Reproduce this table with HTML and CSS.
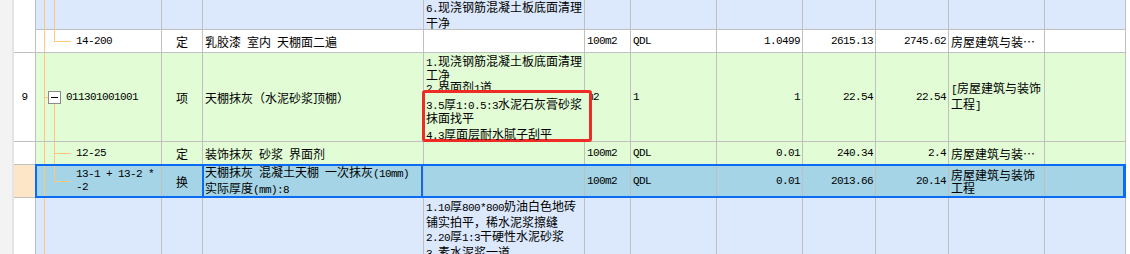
FILE: index.html
```html
<!DOCTYPE html>
<html lang="zh-CN">
<head>
<meta charset="utf-8">
<title>清单</title>
<link rel="stylesheet" href="styles.css">
</head>
<body>
<div class="strip"></div>
<div class="sheet">
  <div class="row blue h30">
    <div class="no"></div>
    <div class="code tr-mid"></div>
    <div></div>
    <div></div>
    <div class="desc bottom"><span><span class="a">6.</span>现浇钢筋混凝土板底面清理<br>干净</span></div>
    <div></div><div></div><div></div><div></div><div></div><div></div><div></div>
  </div>

  <div class="row white h23">
    <div class="no"></div>
    <div class="code tr-end"><span class="a">14-200</span></div>
    <div class="c">定</div>
    <div class="nm">乳胶漆 室内 天棚面二遍</div>
    <div></div>
    <div class="a">100m2</div>
    <div class="a">QDL</div>
    <div class="a r">1.0499</div>
    <div class="a r">2615.13</div>
    <div class="a r">2745.62</div>
    <div><span class="ell">房屋建筑与装饰工程</span></div>
    <div></div>
  </div>

  <div class="row green h89">
    <div class="no c a">9</div>
    <div class="code par tr-par"><span class="box"></span><span class="a">011301001001</span></div>
    <div class="c">项</div>
    <div class="nm">天棚抹灰（水泥砂浆顶棚）</div>
    <div class="desc top rel">
      <span class="lines12"><span class="a">1.</span>现浇钢筋混凝土板底面清理<br>工净<br><span class="a">2.</span>界面剂<span class="a">1</span>道</span>
      <div class="mark">
        <div class="l1"><span class="a">3.5</span>厚<span class="a">1:0.5:3</span>水泥石灰膏砂浆</div>
        <div class="l1">抹面找平</div>
        <div class="l3"><span class="a">4.3</span>厚面层耐水腻子刮平</div>
      </div>
    </div>
    <div class="a">m2</div>
    <div class="a">1</div>
    <div class="a r">1</div>
    <div class="a r">22.54</div>
    <div class="a r">22.54</div>
    <div><span><span class="a">[</span>房屋建筑与装饰<br>工程<span class="a">]</span></span></div>
    <div></div>
  </div>

  <div class="row green h23">
    <div class="no"></div>
    <div class="code tr-tee"><span class="a">12-25</span></div>
    <div class="c">定</div>
    <div class="nm">装饰抹灰 砂浆 界面剂</div>
    <div></div>
    <div class="a">100m2</div>
    <div class="a">QDL</div>
    <div class="a r">0.01</div>
    <div class="a r">240.34</div>
    <div class="a r">2.4</div>
    <div><span class="ell">房屋建筑与装饰工程</span></div>
    <div></div>
  </div>

  <div class="row sel h33">
    <div class="no cur"></div>
    <div class="code tr-end"><span class="a">13-1 + 13-2 *<br>-2</span></div>
    <div class="c">换</div>
    <div class="nm focus"><span>天棚抹灰 混凝土天棚 一次抹灰<span class="a">(10mm)</span><br>实际厚度<span class="a">(mm):8</span></span></div>
    <div></div>
    <div class="a">100m2</div>
    <div class="a">QDL</div>
    <div class="a r">0.01</div>
    <div class="a r">2013.66</div>
    <div class="a r">20.14</div>
    <div><span>房屋建筑与装饰<br>工程</span></div>
    <div></div>
  </div>

  <div class="row blue h70">
    <div class="no"></div>
    <div class="code tr"></div>
    <div></div>
    <div></div>
    <div class="desc top"><span class="lines14"><span class="a">1.10</span>厚<span class="a">800*800</span>奶油白色地砖<br>铺实拍平，稀水泥浆擦缝<br><span class="a">2.20</span>厚<span class="a">1:3</span>干硬性水泥砂浆<br><span class="a">3.</span>素水泥浆一道</span></div>
    <div></div><div></div><div></div><div></div><div></div><div></div><div></div>
  </div>
</div>
</body>
</html>
```

FILE: styles.css
```css
* { box-sizing: border-box; margin: 0; padding: 0; }

html, body {
  width: 1130px;
  height: 254px;
  overflow: hidden;
  background: #ffffff;
}

body {
  display: flex;
  align-items: flex-start;
  font-family: "Noto Sans CJK SC", "Noto Sans", sans-serif;
  font-size: 12px;
  line-height: 13px;
  color: #000;
}

.strip {
  flex: none;
  width: 14px;
  height: 254px;
  background: #f3f3f3;
  border-right: 2px solid #e4e4e4;
}

.sheet {
  flex: none;
  width: 1112px;
  display: flex;
  flex-direction: column;
}

.row {
  display: grid;
  grid-template-columns: 22px 126px 41px 221px 161px 46px 86px 86px 73px 73px 96px 81px;
  border-bottom: 1px solid #c0c0c0;
}

.row > div {
  display: flex;
  align-items: center;
  min-width: 0;
  padding: 0 2px;
  white-space: nowrap;
  border-right: 1px solid #c0c0c0;
}

.h30 { height: 30px; }
.h23 { height: 23px; }
.h89 { height: 89px; }
.h33 { height: 33px; }
.h70 { height: 70px; }

.blue { background: #dce9fc; }
.green { background: #e2fcd6; }
.white { background: #ffffff; }
.sel { background: #a5d4e6; position: relative; }

.sel::after {
  content: "";
  position: absolute;
  left: 21px;
  top: -1px;
  right: 0;
  bottom: -1px;
  border: 2px solid #0a6cf5;
  border-right-width: 3px;
  pointer-events: none;
}

.row > .no { background: #ffffff; justify-content: center; padding: 0; }
.row > .no.cur { background: #fde5c8; }

.c { justify-content: center; }
.r { justify-content: flex-end; }
.row > .r { padding-right: 2px; }

.a {
  font-family: "Liberation Mono", "DejaVu Sans Mono", monospace;
  font-size: 11px;
  letter-spacing: -0.6px;
}

.nm { word-spacing: 3.3px; }
.nm .a { word-spacing: 0; }

.ell {
  display: block;
  min-width: 0;
  overflow: hidden;
  text-overflow: ellipsis;
  white-space: nowrap;
}

.row > .bottom { align-items: flex-end; padding-bottom: 4px; }
.row > .top { align-items: flex-start; }
.lines12 { display: block; line-height: 12px; padding-top: 2px; }
.lines14 { display: block; line-height: 14px; padding-top: 1px; }

.rel { position: relative; }

.mark {
  position: absolute;
  left: -2px;
  top: 37px;
  width: 170px;
  height: 52px;
  border: 3px solid #ee2b24;
  border-radius: 3px;
  background: #e2fcd6;
  padding: 5px 0 0 1px;
  line-height: 12px;
}
.mark .l3 { margin-top: 4px; }

/* tree lines */
.row > .code { padding-left: 40px; }
.row > .code.par { padding-left: 12px; }

.tr {
  background-image: linear-gradient(#ffc77d, #ffc77d);
  background-repeat: no-repeat;
  background-size: 1px 100%;
  background-position: 8px 0;
}
.tr-mid {
  background-image: linear-gradient(#ffc77d, #ffc77d), linear-gradient(#ffc77d, #ffc77d);
  background-repeat: no-repeat;
  background-size: 1px 100%, 1px 100%;
  background-position: 8px 0, 18px 0;
}
.tr-end {
  background-image: linear-gradient(#ffc77d, #ffc77d), linear-gradient(#ffc77d, #ffc77d), linear-gradient(#ffc77d, #ffc77d);
  background-repeat: no-repeat;
  background-size: 1px 100%, 1px 50%, 17px 1px;
  background-position: 8px 0, 18px 0, 18px 50%;
}
.tr-tee {
  background-image: linear-gradient(#ffc77d, #ffc77d), linear-gradient(#ffc77d, #ffc77d), linear-gradient(#ffc77d, #ffc77d);
  background-repeat: no-repeat;
  background-size: 1px 100%, 1px 100%, 17px 1px;
  background-position: 8px 0, 18px 0, 18px 50%;
}
.tr-par {
  background-image: linear-gradient(#ffc77d, #ffc77d), linear-gradient(#ffc77d, #ffc77d), linear-gradient(#ffc77d, #ffc77d);
  background-repeat: no-repeat;
  background-size: 1px 100%, 4px 1px, 1px 50%;
  background-position: 8px 0, 8px 50%, 18px 100%;
}

.box {
  flex: none;
  width: 13px;
  height: 13px;
  margin-right: 5px;
  border: 1px solid #8a8a8a;
  background: #ffffff linear-gradient(#000, #000) no-repeat center / 7px 1px;
}

.focus { position: relative; }
.focus::after {
  content: "";
  position: absolute;
  left: -1px;
  right: 0;
  top: 0;
  bottom: 0;
  border-left: 2px solid #0a6cf5;
  border-right: 2px solid #0a6cf5;
  pointer-events: none;
}
```
